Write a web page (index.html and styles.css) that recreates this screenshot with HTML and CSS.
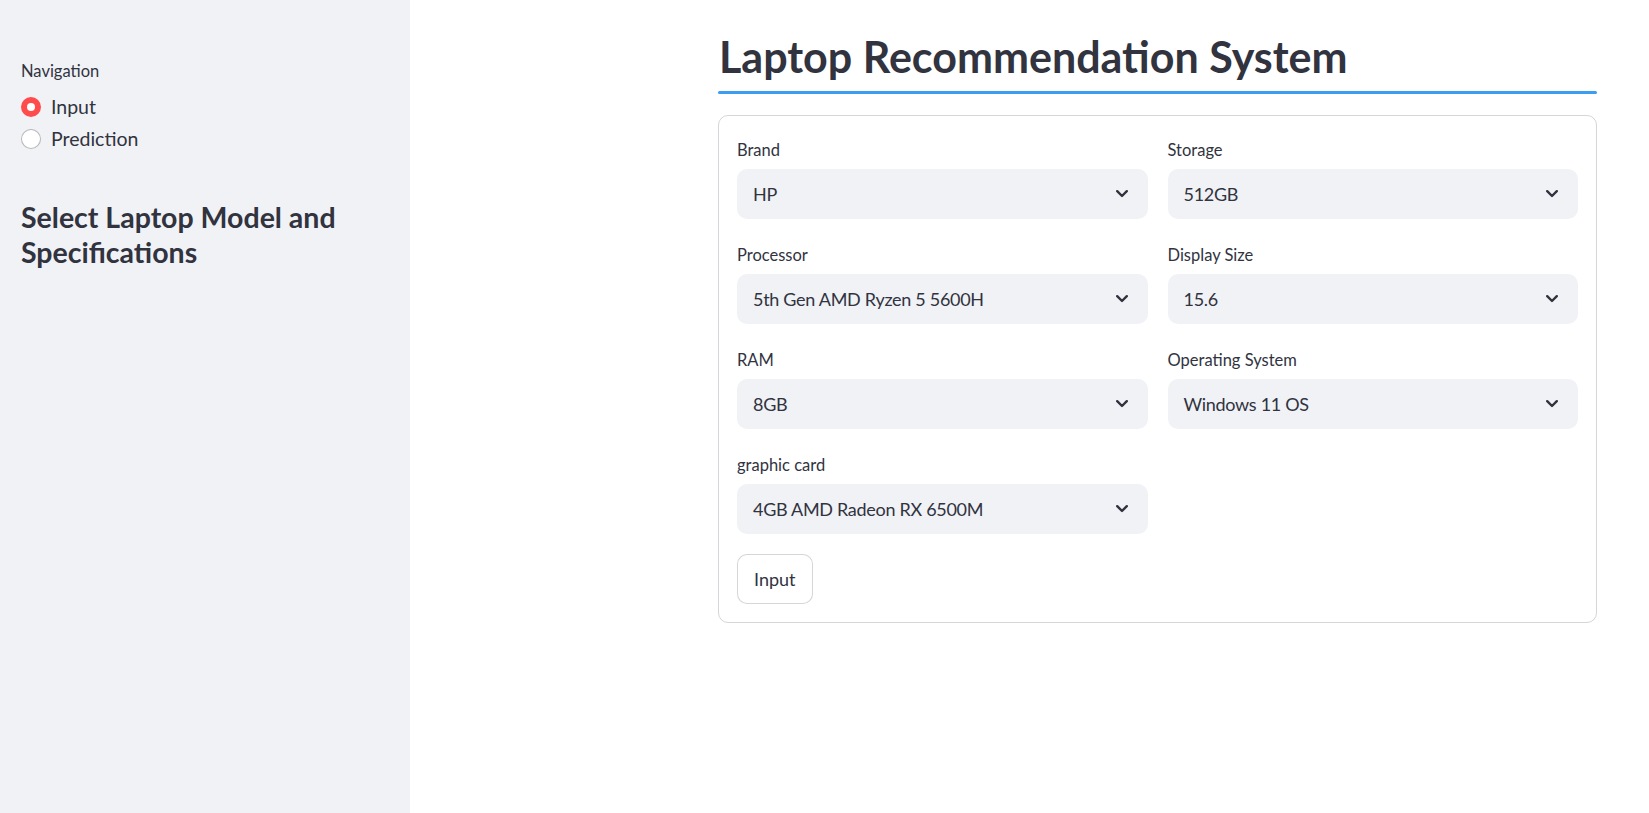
FILE: index.html
```html
<!DOCTYPE html>
<html lang="en">
<head>
<meta charset="utf-8">
<title>Laptop Recommendation System</title>
<link rel="stylesheet" href="styles.css">
</head>
<body>
<div class="app">
  <aside class="sidebar">
    <div class="nav-label">Navigation</div>
    <div class="radio-group">
      <div class="radio-row"><span class="radio checked"></span><span class="radio-text">Input</span></div>
      <div class="radio-row"><span class="radio"></span><span class="radio-text">Prediction</span></div>
    </div>
    <h3 class="side-title">Select Laptop Model and Specifications</h3>
  </aside>
  <main class="main">
    <div class="content">
      <h2 class="title">Laptop Recommendation System</h2>
      <div class="divider"></div>
      <form class="card">
        <div class="grid">
          <div class="field">
            <div class="label">Brand</div>
            <div class="select"><span>HP</span><svg class="chev" viewBox="0 0 12 8" width="12" height="8"><polyline points="1.2,1.2 6,6 10.8,1.2"/></svg></div>
          </div>
          <div class="field">
            <div class="label">Storage</div>
            <div class="select"><span>512GB</span><svg class="chev" viewBox="0 0 12 8" width="12" height="8"><polyline points="1.2,1.2 6,6 10.8,1.2"/></svg></div>
          </div>
          <div class="field">
            <div class="label">Processor</div>
            <div class="select"><span>5th Gen AMD Ryzen 5 5600H</span><svg class="chev" viewBox="0 0 12 8" width="12" height="8"><polyline points="1.2,1.2 6,6 10.8,1.2"/></svg></div>
          </div>
          <div class="field">
            <div class="label">Display Size</div>
            <div class="select"><span>15.6</span><svg class="chev" viewBox="0 0 12 8" width="12" height="8"><polyline points="1.2,1.2 6,6 10.8,1.2"/></svg></div>
          </div>
          <div class="field">
            <div class="label">RAM</div>
            <div class="select"><span>8GB</span><svg class="chev" viewBox="0 0 12 8" width="12" height="8"><polyline points="1.2,1.2 6,6 10.8,1.2"/></svg></div>
          </div>
          <div class="field">
            <div class="label">Operating System</div>
            <div class="select"><span>Windows 11 OS</span><svg class="chev" viewBox="0 0 12 8" width="12" height="8"><polyline points="1.2,1.2 6,6 10.8,1.2"/></svg></div>
          </div>
          <div class="field">
            <div class="label">graphic card</div>
            <div class="select"><span>4GB AMD Radeon RX 6500M</span><svg class="chev" viewBox="0 0 12 8" width="12" height="8"><polyline points="1.2,1.2 6,6 10.8,1.2"/></svg></div>
          </div>
        </div>
        <div class="actions">
          <button type="button" class="btn">Input</button>
        </div>
      </form>
    </div>
  </main>
</div>
</body>
</html>
```
FILE: styles.css
```css
* { box-sizing: border-box; }
html, body { margin: 0; padding: 0; height: 100%; }
body {
  font-family: Lato, "Liberation Sans", sans-serif;
  color: #31333F;
  background: #ffffff;
}
.app {
  display: flex;
  min-height: 100vh;
}
.sidebar {
  width: 410px;
  flex: 0 0 410px;
  background: #F0F2F6;
  padding: 59px 20px 0 21px;
}
.nav-label {
  font-size: 16.5px;
  line-height: 24px;
  margin-bottom: 8px;
}
.radio-group {
  display: flex;
  flex-direction: column;
}
.radio-row {
  display: flex;
  align-items: center;
  height: 32px;
  gap: 10px;
}
.radio {
  width: 20px;
  height: 20px;
  border-radius: 50%;
  border: 1px solid rgba(49, 51, 63, 0.35);
  background: #ffffff;
  display: flex;
  align-items: center;
  justify-content: center;
}
.radio.checked {
  border: none;
  background: #FF4B4B;
}
.radio.checked::after {
  content: "";
  width: 8px;
  height: 8px;
  border-radius: 50%;
  background: #ffffff;
}
.radio-text {
  font-size: 19.5px;
  line-height: 24px;
}
.side-title {
  margin: 45px 0 0 0;
  font-size: 28.5px;
  line-height: 35px;
  font-weight: 700;
}
.main {
  flex: 1;
  padding: 30px 0 0 308px;
}
.content {
  width: 879px;
}
.title {
  margin: 0 0 0 1px;
  font-size: 43px;
  line-height: 54px;
  font-weight: 700;
}
.divider {
  height: 3px;
  border-radius: 2px;
  background: #3D9DF3;
  margin-top: 7px;
}
.card {
  margin-top: 21px;
  border: 1px solid rgba(49, 51, 63, 0.2);
  border-radius: 10px;
  padding: 19px 18px 18px 18px;
}
.grid {
  display: grid;
  grid-template-columns: 1fr 1fr;
  column-gap: 20px;
  row-gap: 21px;
}
.label {
  font-size: 16.5px;
  line-height: 24px;
  padding-top: 3px;
  margin-bottom: 7px;
}
.select {
  height: 50px;
  background: #F0F2F6;
  border-radius: 10px;
  display: flex;
  align-items: center;
  justify-content: space-between;
  padding: 0 20px 0 16px;
  font-size: 18px;
  letter-spacing: -0.3px;
}
.chev {
  fill: none;
  stroke: #31333F;
  stroke-width: 2.4;
  stroke-linecap: round;
  stroke-linejoin: round;
}
.actions {
  margin-top: 20px;
}
.btn {
  height: 50px;
  padding: 0 16px;
  border: 1px solid rgba(49, 51, 63, 0.2);
  border-radius: 10px;
  background: #ffffff;
  font-family: inherit;
  font-size: 18px;
  color: #31333F;
}
```
